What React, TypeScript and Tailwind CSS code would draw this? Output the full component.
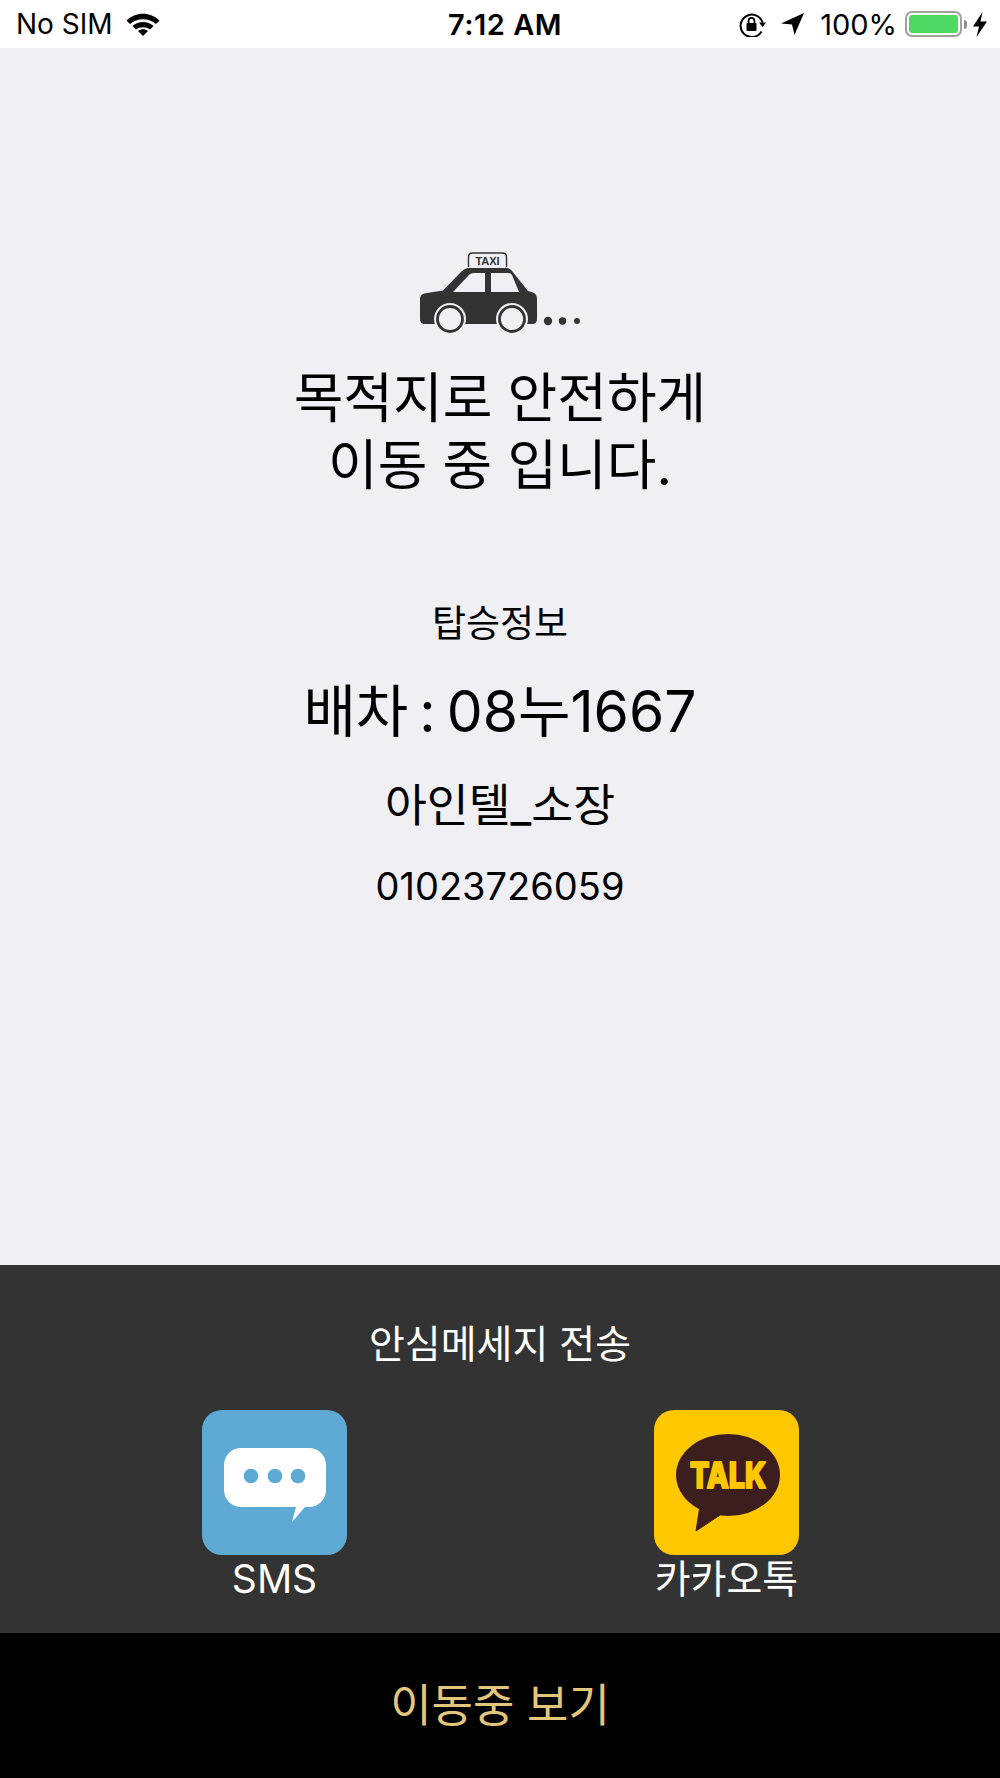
const font = "font-['Inter','Noto_Sans_CJK_KR',sans-serif]";

function Wifi() {
  return (
    <svg width="34" height="24" viewBox="0 0 34 24" className="ml-[13px]">
      <path d="M0.5 8.5C9.5 -0.5 24.5 -0.5 33.5 8.5L30 12C23 5.5 11 5.5 4 12Z" fill="#000" />
      <path d="M6.5 14C12.5 8.5 21.5 8.5 27.5 14L24 17.5C20 14.5 14 14.5 10 17.5Z" fill="#000" />
      <path d="M12 19C15 16.8 19 16.8 22 19L17 24Z" fill="#000" />
    </svg>
  );
}

function RotationLock() {
  return (
    <svg width="27" height="25" viewBox="0 0 27 25">
      <path d="M22.5 19.5A11.2 11.2 0 1 1 23.5 10.5" fill="none" stroke="#000" strokeWidth="2" />
      <path d="M20 10.5L27 10.5L23.6 15Z" fill="#000" />
      <rect x="7.5" y="11" width="10" height="8" rx="1" fill="#000" />
      <path d="M9.6 11V8.8A2.9 2.9 0 0 1 15.4 8.8V11" fill="none" stroke="#000" strokeWidth="1.8" />
    </svg>
  );
}

function Locate() {
  return (
    <svg width="23" height="22" viewBox="0 0 23 22">
      <path d="M0 10.5L23 0L13.5 22L11 11.5Z" fill="#000" />
    </svg>
  );
}

function Battery() {
  return (
    <div className="flex items-center">
      <div className="w-[57px] h-[26px] rounded-[7px] border-2 border-[#a0a0a0] p-[2px] bg-white">
        <div className="w-full h-full rounded-[3px] bg-[#4cd964]" />
      </div>
      <div className="w-[3px] h-[9px] ml-[2px] bg-[#8e8e8e] rounded-r-[3px]" />
    </div>
  );
}

function Bolt() {
  return (
    <svg width="14" height="25" viewBox="0 0 14 25">
      <path d="M9.5 0L0 14.5H6L3.5 25L14 9.5H7.5Z" fill="#000" />
    </svg>
  );
}

function TaxiIcon() {
  return (
    <svg width="160" height="82" viewBox="0 0 160 82" className="block">
      <path d="M48.5 15V5Q48.5 1 52.5 1H82.5Q86.5 1 86.5 5V15" fill="none" stroke="#333" strokeWidth="1.4" />
      <text x="67.5" y="12.5" textAnchor="middle" fontSize="11" fontWeight="700" fill="#333" fontFamily="Liberation Sans, sans-serif">TAXI</text>
      <path d="M0 47C0 43 3 41.5 7 41L23 38.5L41 20Q45 16 49 16H86Q90 16 92 19L108 39L113 40.5Q117 42 117 47V67Q117 72 112 72H5Q0 72 0 67Z" fill="#333" />
      <path d="M33 40L48 24Q50 21 54 21H65V40Z" fill="#efeff4" />
      <path d="M71 21H88Q91 21 92 23L99 40H71Z" fill="#efeff4" />
      <circle cx="30" cy="67" r="16" fill="#efeff4" />
      <circle cx="30" cy="67" r="12.5" fill="#efeff4" stroke="#333" strokeWidth="2.8" />
      <circle cx="92" cy="67" r="16" fill="#efeff4" />
      <circle cx="92" cy="67" r="12.5" fill="#efeff4" stroke="#333" strokeWidth="2.8" />
      <circle cx="128" cy="69" r="4.2" fill="#333" />
      <circle cx="142.5" cy="69" r="3.7" fill="#333" />
      <circle cx="157" cy="69" r="3" fill="#333" />
    </svg>
  );
}

function SmsIcon() {
  return (
    <div className="w-[145px] h-[145px] rounded-[20px] bg-[#5eaad4] flex items-center justify-center">
      <svg width="145" height="145" viewBox="0 0 145 145">
        <path d="M39 38H107A17 17 0 0 1 124 55V80A17 17 0 0 1 107 97H103L90 112L94 97H39A17 17 0 0 1 22 80V55A17 17 0 0 1 39 38Z" fill="#fff" />
        <circle cx="49" cy="66" r="7.3" fill="#5eaad4" />
        <circle cx="73" cy="66" r="7.3" fill="#5eaad4" />
        <circle cx="96" cy="66" r="7.3" fill="#5eaad4" />
      </svg>
    </div>
  );
}

function TalkIcon() {
  return (
    <div className="w-[145px] h-[145px] rounded-[20px] bg-[#ffc700] flex items-center justify-center">
      <svg width="145" height="145" viewBox="0 0 145 145">
        <ellipse cx="74" cy="65" rx="52" ry="41" fill="#3d1e1e" />
        <path d="M46 96L42 121L66 105Z" fill="#3d1e1e" strokeLinejoin="round" stroke="#3d1e1e" strokeWidth="1" />
        <text x="74" y="78" textAnchor="middle" textLength="76" lengthAdjust="spacingAndGlyphs" fontSize="35" fontWeight="800" fill="#ffc700" stroke="#ffc700" strokeWidth="2" strokeLinejoin="round" fontFamily="Inter, sans-serif">TALK</text>
      </svg>
    </div>
  );
}

export default function App() {
  return (
    <div className={`${font} w-[1000px] h-[1778px] flex flex-col bg-[#efeff4] overflow-hidden text-black`}>
      <div className="h-12 bg-white flex items-center justify-between pl-4 pr-[13px] relative shrink-0">
        <div className="flex items-center">
          <span className="text-[28px] leading-none">No SIM</span>
          <Wifi />
        </div>
        <span className="absolute left-0 right-0 pl-[10px] text-center text-[29px] font-semibold leading-none tracking-[0.5px]">7:12 AM</span>
        <div className="flex items-center relative">
          <RotationLock />
          <div className="w-[15px]" />
          <Locate />
          <div className="w-[16px]" />
          <span className="text-[29px] leading-none">100%</span>
          <div className="w-[8px]" />
          <Battery />
          <div className="w-[6px]" />
          <Bolt />
        </div>
      </div>

      <div className="flex-1 flex flex-col items-center">
        <div className="mt-[204px]">
          <TaxiIcon />
        </div>
        <div className="mt-[31px] text-[54px] leading-[67px] text-center">
          <div>목적지로 안전하게</div>
          <div>이동 중 입니다.</div>
        </div>
        <div className="mt-[99px] text-[37px] leading-[52px]">탑승정보</div>
        <div className="mt-[27px] text-[57px] leading-[70px] [word-spacing:-5px]">배차 : 08누1667</div>
        <div className="mt-[29px] text-[45.5px] leading-[60px]">아인텔_소장</div>
        <div className="mt-[25px] text-[38px] leading-[50px]">01023726059</div>
      </div>

      <div className="h-[368px] shrink-0 bg-[#333333] flex flex-col items-center text-white">
        <div className="mt-[54px] text-[39px] leading-[50px]">안심메세지 전송</div>
        <div className="mt-[41px] w-full flex justify-between pl-[202px] pr-[201px]">
          <div className="flex flex-col items-center">
            <SmsIcon />
            <div className="text-[39px] leading-[50px] mt-[-1px]">SMS</div>
          </div>
          <div className="flex flex-col items-center">
            <TalkIcon />
            <div className="text-[39px] leading-[50px] mt-[-1px]">카카오톡</div>
          </div>
        </div>
      </div>

      <div className="h-[145px] shrink-0 bg-black flex items-center justify-center text-[#e3c57c] text-[45px]">
        이동중 보기
      </div>
    </div>
  );
}
